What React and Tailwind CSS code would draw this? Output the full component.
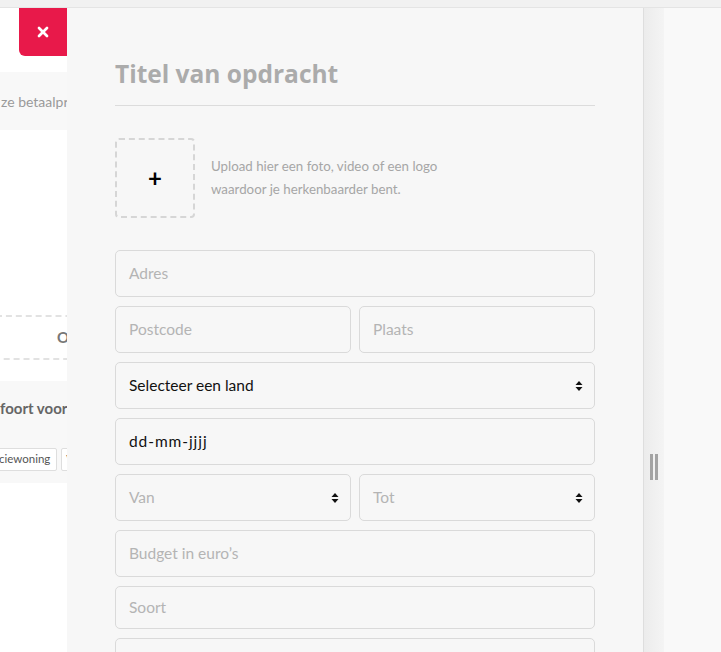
import { X } from "lucide-react";

const font = { fontFamily: "Lato, 'Open Sans', sans-serif" };

// small up/down arrows used by the selects
const SelectArrow = () => (
  <svg width="8" height="12" viewBox="0 0 8 12" className="shrink-0">
    <path d="M4 1 L7.5 5 L0.5 5 Z" fill="#111" />
    <path d="M4 11 L7.5 7 L0.5 7 Z" fill="#111" />
  </svg>
);

const Field = ({ children, placeholder = true, arrow = false, h = "h-[47px]" }) => (
  <div
    className={`${h} w-full flex items-center justify-between rounded-[5px] border border-[#dadada] bg-[#f7f7f7] pl-[13px] pr-[11px] text-[15.5px] ${
      placeholder ? "text-[#b4b4b4]" : "text-[#111]"
    }`}
  >
    <span>{children}</span>
    {arrow && <SelectArrow />}
  </div>
);

const App = () => {
  return (
    <div className="h-[652px] w-full overflow-hidden bg-[#f9f9f9] flex flex-col" style={font}>
      {/**top strip */}
      <div className="h-2 shrink-0 bg-[#f1f1f1] border-b border-[#e4e4e4]" />

      <div className="flex flex-1 min-h-0">
        {/**page behind the drawer */}
        <div className="w-[67px] shrink-0 bg-white overflow-hidden flex flex-col">
          <div className="flex">
            <button className="ml-[19px] w-12 h-12 bg-[#e8194a] rounded-bl-[6px] flex items-center justify-center">
              <X className="w-4 h-4 text-white" strokeWidth={4} />
            </button>
          </div>
          <div className="mt-[16px] h-[58px] bg-[#f8f8f8] flex items-center whitespace-nowrap text-[14px] text-[#9a9a9a] pl-[1px]">
            ze betaalprovider
          </div>
          <div className="mt-[185px] -ml-2 w-[200px] h-[45px] border-2 border-dashed border-[#e2e2e2] rounded-[4px] flex items-center pl-[63px] text-[15px] font-bold text-[#777]">
            Of
          </div>
          <div className="mt-[21px] h-[102px] bg-[#f8f8f8] flex flex-col whitespace-nowrap">
            <div className="mt-[16px] text-[15px] font-bold text-[#666]">foort voor</div>
            <div className="mt-[28px] flex gap-[4px] -ml-[8px]">
              <span className="h-[23px] px-[6px] bg-white border border-[#dedede] rounded-[2px] text-[11.5px] text-[#555] flex items-center">
                ciewoning
              </span>
              <span className="h-[23px] px-[4px] bg-white border border-[#dedede] rounded-[2px] text-[11.5px] text-[#555] flex items-center">
                Villa
              </span>
            </div>
          </div>
        </div>

        {/**drawer */}
        <main className="w-[577px] shrink-0 bg-[#f7f7f7] border-r border-[#dedede] px-12 flex flex-col">
          <h1
            className="pt-[50px] pb-[15px] text-[24.5px] leading-8 font-bold text-[#ababab] border-b border-[#dcdcdc]"
            style={{ fontFamily: "'Open Sans', sans-serif" }}
          >
            Titel van opdracht
          </h1>

          <div className="mt-[32px] flex items-center gap-4">
            <div className="w-20 h-20 shrink-0 border-2 border-dashed border-[#d6d6d6] rounded-[4px] flex items-center justify-center text-[24px] font-bold text-black">
              +
            </div>
            <p className="text-[13.3px] leading-[23px] text-[#a6a6a6]">
              Upload hier een foto, video of een logo
              <br />
              waardoor je herkenbaarder bent.
            </p>
          </div>

          <div className="mt-[32px] flex flex-col gap-[9px]">
            <Field>Adres</Field>
            <div className="grid grid-cols-2 gap-2">
              <Field>Postcode</Field>
              <Field>Plaats</Field>
            </div>
            <Field placeholder={false} arrow>
              Selecteer een land
            </Field>
            <Field placeholder={false}>
              <span className="tracking-[0.06em]">dd-mm-jjjj</span>
            </Field>
            <div className="grid grid-cols-2 gap-2">
              <Field arrow>Van</Field>
              <Field arrow>Tot</Field>
            </div>
            <Field>Budget in euro’s</Field>
            <Field h="h-[43px]">Soort</Field>
            <Field>&nbsp;</Field>
          </div>
        </main>

        {/**drawer shadow with handle */}
        <div className="w-5 shrink-0 bg-gradient-to-r from-[#ececec] to-[#f4f4f4] flex items-start pl-[6px] gap-[2px]">
          <div className="mt-[446px] w-[3px] h-[26px] bg-[#a3a3a3]" />
          <div className="mt-[446px] w-[3px] h-[26px] bg-[#a3a3a3]" />
        </div>

        <div className="flex-1 bg-[#f9f9f9]" />
      </div>
    </div>
  );
};

export default App;
